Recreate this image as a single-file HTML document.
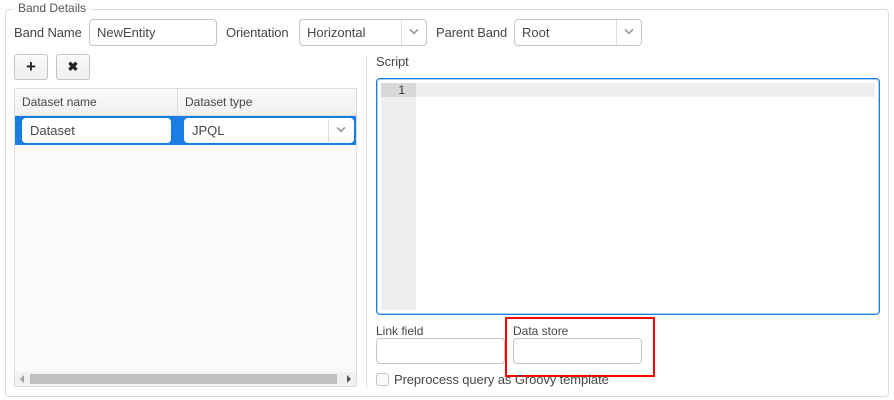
<!DOCTYPE html>
<html><head><style>
*{box-sizing:border-box;margin:0;padding:0}
body{width:894px;height:400px;background:#fff;font-family:"Liberation Sans",sans-serif;font-size:13px;color:#464646;position:relative;overflow:hidden}
.a{position:absolute}
.inp{position:absolute;border:1px solid #c5c5c5;border-radius:4px;background:#fff;height:27px;padding-left:7px;line-height:25px;font-size:13px;color:#474747}
.sel .btn{position:absolute;right:0;top:0;bottom:0;width:25px;border-left:1px solid #ddd}
.chev{position:absolute;left:8px;top:6px;width:8px;height:8px;border-right:2px solid #999;border-bottom:2px solid #999;transform:rotate(45deg) scale(.8)}
.lbl{position:absolute;font-size:13px;color:#464646;letter-spacing:-0.1px}
.pb{position:absolute;border:1px solid #c5c5c5;border-radius:3px;background:linear-gradient(#fafafa,#efefef);width:34px;height:26px;text-align:center;line-height:24px;font-weight:bold;color:#222}
</style></head><body>
<div class="a" style="left:5px;top:9px;width:884px;height:388px;border:1px solid #dcdcdc;border-radius:4px"></div>
<div class="a" style="left:13px;top:1px;padding:0 5px;background:#fff;font-size:12px;color:#555">Band Details</div>

<div class="lbl" style="left:14px;top:25px">Band Name</div>
<div class="inp" style="left:89px;top:19px;width:128px">NewEntity</div>
<div class="lbl" style="left:226px;top:25px">Orientation</div>
<div class="inp sel" style="left:299px;top:19px;width:128px">Horizontal<div class="btn"><div class="chev"></div></div></div>
<div class="lbl" style="left:436px;top:25px">Parent Band</div>
<div class="inp sel" style="left:514px;top:19px;width:128px">Root<div class="btn"><div class="chev"></div></div></div>

<div class="pb" style="left:14px;top:54px;font-size:17px">+</div>
<div class="pb" style="left:56px;top:54px;font-size:13px">✖</div>

<div class="a" style="left:14px;top:88px;width:343px;height:299px;border:1px solid #dcdcdc;background:#fafafa"></div>
<div class="a" style="left:15px;top:89px;width:341px;height:27px;background:linear-gradient(#fafafa,#f0f0f0);border-bottom:1px solid #dcdcdc"></div>
<div class="a" style="left:177px;top:89px;width:1px;height:27px;background:#dcdcdc"></div>
<div class="a" style="left:22px;top:95px;font-size:12px">Dataset name</div>
<div class="a" style="left:185px;top:95px;font-size:12px">Dataset type</div>
<div class="a" style="left:15px;top:116px;width:341px;height:29px;background:#197de1"></div>
<div class="inp" style="left:22px;top:118px;width:149px;height:25px;line-height:23px;border-color:#fff">Dataset</div>
<div class="inp sel" style="left:184px;top:118px;width:170px;height:25px;line-height:23px;border-color:#fff">JPQL<div class="btn"><div class="chev" style="top:5px"></div></div></div>
<div class="a" style="left:15px;top:372px;width:341px;height:14px;background:#f0f0f0"></div>
<div class="a" style="left:30px;top:374px;width:307px;height:10px;background:#c1c1c1"></div>
<div class="a" style="left:20px;top:375px;width:0;height:0;border:4px solid transparent;border-right-color:#a0a0a0;border-left:0"></div>
<div class="a" style="left:347px;top:375px;width:0;height:0;border:4px solid transparent;border-left-color:#555;border-right:0"></div>

<div class="a" style="left:366px;top:55px;width:1px;height:332px;background:#dcdcdc"></div>

<div class="lbl" style="left:376px;top:54px">Script</div>
<div class="a" style="left:376px;top:78px;width:504px;height:237px;border:1px solid #197de1;border-radius:4px;box-shadow:0 0 0 1px #a9cff4 inset;background:#fff"></div>
<div class="a" style="left:381px;top:83px;width:35px;height:227px;background:#eee"></div>
<div class="a" style="left:381px;top:83px;width:35px;height:14px;background:#d8d8d8;font-size:12px;line-height:14px;text-align:right;padding-right:11px;color:#333">1</div>
<div class="a" style="left:416px;top:83px;width:459px;height:14px;background:#efefef"></div>

<div class="a" style="left:376px;top:324px;font-size:12px">Link field</div>
<div class="inp" style="left:376px;top:338px;width:129px;height:26px"></div>
<div class="a" style="left:513px;top:324px;font-size:12px">Data store</div>
<div class="inp" style="left:513px;top:338px;width:129px;height:26px"></div>
<div class="a" style="left:505px;top:317px;width:150px;height:60px;border:2px solid #f00"></div>

<div class="a" style="left:376px;top:373px;width:13px;height:13px;border:1px solid #c5c5c5;border-radius:3px;background:#fafafa"></div>
<div class="lbl" style="left:394px;top:372px">Preprocess query as Groovy template</div>
</body></html>
